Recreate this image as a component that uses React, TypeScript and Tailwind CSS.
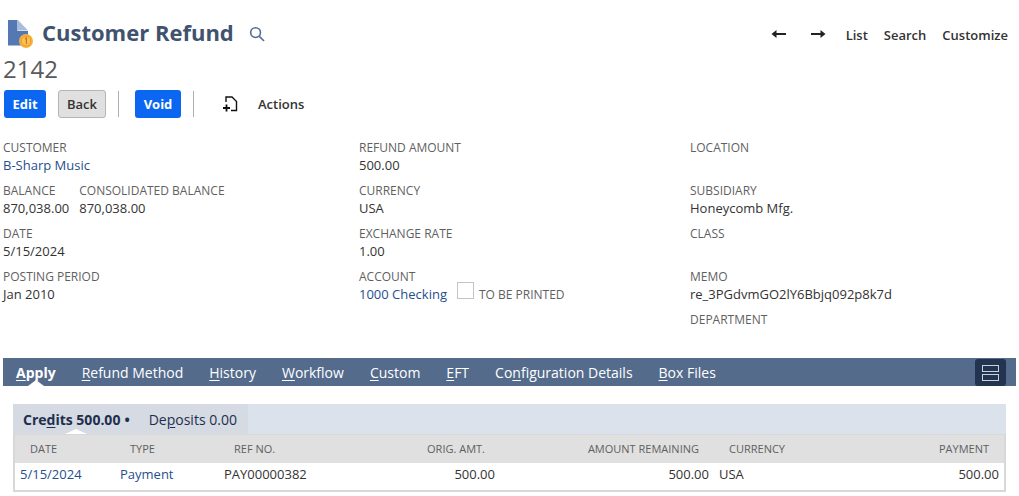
import React from "react";

const Label = ({ children }: { children: React.ReactNode }) => (
  <div className="text-[12px] leading-[18px] text-[#5f5f5f] uppercase">{children}</div>
);
const Value = ({ children, link }: { children?: React.ReactNode; link?: boolean }) => (
  <div className={`text-[13px] leading-[18px] h-[18px] whitespace-nowrap -mt-px ${link ? "text-[#1f4f8f]" : "text-[#333333]"}`}>{children}</div>
);
const Field = ({ label, value, link }: { label: string; value?: string; link?: boolean }) => (
  <div className="h-[43px] pt-[2px]">
    <Label>{label}</Label>
    <Value link={link}>{value}</Value>
  </div>
);
const U = ({ children }: { children: React.ReactNode }) => <span className="underline underline-offset-2">{children}</span>;

const Tab = ({ children, active }: { children: React.ReactNode; active?: boolean }) => (
  <div className={`relative h-[28px] flex items-center text-[14px] whitespace-nowrap ${active ? "font-bold text-white" : "text-white"}`}>
    {children}
    {active && <div className="absolute bottom-0 left-1/2 -ml-[8px] w-0 h-0 border-x-[8px] border-x-transparent border-b-[6px] border-b-white" />}
  </div>
);

const cols = "grid grid-cols-[100px_104px_120px_161px_214px_136px_154px]";

export default function App() {
  return (
    <div className="w-[1019px] h-[496px] overflow-hidden bg-white relative font-['Open_Sans',sans-serif]">
      <div className="flex items-start h-[54px]">
        <svg width="28" height="30" viewBox="0 0 28 30" className="ml-[7px] mt-[19px]">
          <path d="M1 1h9.5v11H21v14.5H1z" fill="#5478b4" />
          <path d="M11 1l10 10.5H11z" fill="#a9bcd9" />
          <circle cx="19" cy="22" r="7" fill="#f7b23b" />
          <circle cx="19" cy="22" r="4.8" fill="#fbc05a" stroke="#ea9518" strokeWidth="0.8" />
          <path d="M17.8 20l1.6-.9v6" stroke="#c87a10" strokeWidth="1.2" fill="none" />
        </svg>
        <div className="ml-[7px] mt-[16px] text-[22px] leading-[32px] font-bold text-[#3f526e] whitespace-nowrap">Customer Refund</div>
        <svg width="16" height="16" viewBox="0 0 17 17" className="ml-[15px] mt-[26px]" fill="none" stroke="#4f6f98" strokeWidth="1.7">
          <circle cx="7" cy="7" r="5.2" />
          <path d="M11 11l5 5" />
        </svg>
        <div className="ml-auto mt-[26px] flex items-center text-[13px] leading-[18px] font-semibold text-[#333333] pr-[11px]">
          <svg width="15" height="10" viewBox="0 0 15 10" fill="none" className="mb-[2px]">
            <path d="M15 5H4" stroke="#222" strokeWidth="2" />
            <path d="M5.5 1L0.5 5l5 4z" fill="#222" />
          </svg>
          <svg width="15" height="10" viewBox="0 0 15 10" fill="none" className="ml-[25px] mb-[2px]">
            <path d="M0 5h11" stroke="#222" strokeWidth="2" />
            <path d="M9.5 1l5 4-5 4z" fill="#222" />
          </svg>
          <span className="ml-[20px]">List</span>
          <span className="ml-[16px]">Search</span>
          <span className="ml-[16px]">Customize</span>
        </div>
      </div>
      <div className="ml-[3px] text-[24px] leading-[30px] text-[#5a5a5a]">2142</div>
      <div className="flex items-center h-[28px] mt-[6px] ml-[4px] text-[13px] font-bold">
        <div className="w-[42px] h-[28px] pt-px rounded-[3px] bg-[#0b66f2] text-white flex items-center justify-center">Edit</div>
        <div className="ml-[12px] w-[48px] h-[28px] pt-px rounded-[3px] bg-[#e0e0e0] border border-[#b5b5b5] text-[#333333] font-semibold flex items-center justify-center">Back</div>
        <div className="ml-[12px] w-px h-[26px] bg-[#b0b0b0]" />
        <div className="ml-[16px] w-[46px] h-[28px] pt-px rounded-[3px] bg-[#0b66f2] text-white flex items-center justify-center">Void</div>
        <div className="ml-[12px] w-px h-[26px] bg-[#b0b0b0]" />
        <svg width="16" height="16" viewBox="0 0 16 16" fill="none" stroke="#111" strokeWidth="1.4" className="ml-[28px]">
          <path d="M4 6V1h6l4.5 4.5V14.5H9" />
          <path d="M1 12h7M4.5 8.5v7" strokeWidth="1.8" />
        </svg>
        <span className="ml-[20px] pt-px font-semibold text-[#333333]">Actions</span>
      </div>

      <div className="grid grid-cols-[356px_331px_1fr] ml-[3px] mt-[19px]">
        <div>
          <Field label="Customer" value="B-Sharp Music" link />
          <div className="h-[43px] pt-[2px] flex gap-[10px]">
            <div><Label>Balance</Label><Value>870,038.00</Value></div>
            <div><Label>Consolidated Balance</Label><Value>870,038.00</Value></div>
          </div>
          <Field label="Date" value="5/15/2024" />
          <Field label="Posting Period" value="Jan 2010" />
        </div>
        <div>
          <Field label="Refund Amount" value="500.00" />
          <Field label="Currency" value="USA" />
          <Field label="Exchange Rate" value="1.00" />
          <div className="h-[43px] pt-[2px]">
            <Label>Account</Label>
            <div className="flex items-start">
              <Value link>1000 Checking</Value>
              <div className="ml-[10px] -mt-[4px] w-[17px] h-[17px] border border-[#c4c4c4] bg-white" />
              <div className="ml-[5px] text-[12px] leading-[18px] text-[#5f5f5f]">TO BE PRINTED</div>
            </div>
          </div>
        </div>
        <div>
          <Field label="Location" />
          <Field label="Subsidiary" value="Honeycomb Mfg." />
          <Field label="Class" />
          <Field label="Memo" value="re_3PGdvmGO2lY6Bbjq092p8k7d" />
          <Field label="Department" />
        </div>
      </div>

      <div className="absolute left-0 right-0 top-[358px]">
        <div className="ml-[3px] w-[1013px] h-[28px] bg-[#546b8c] flex items-center pl-[13px] pr-[10px] gap-[26px]">
          <Tab active><span><U>A</U>pply</span></Tab>
          <Tab><span><U>R</U>efund Method</span></Tab>
          <Tab><span><U>H</U>istory</span></Tab>
          <Tab><span><U>W</U>orkflow</span></Tab>
          <Tab><span><U>C</U>ustom</span></Tab>
          <Tab><span><U>E</U>FT</span></Tab>
          <Tab><span>Co<U>n</U>figuration Details</span></Tab>
          <Tab><span><U>B</U>ox Files</span></Tab>
          <div className="ml-auto mt-px w-[31px] h-[27px] rounded-[3px] bg-[#22344f] flex flex-col items-center justify-center gap-[2px]">
            <div className="w-[17px] h-[7px] border border-[#c9d2de]" />
            <div className="w-[17px] h-[7px] border border-[#c9d2de]" />
          </div>
        </div>

        <div className="ml-[13px] w-[993px] mt-[18px] h-[30px] bg-[#dbe2ec] flex">
          <div className="relative h-[30px] w-[235px] bg-[#d5dae3] flex items-center text-[14px] text-[#1e2f4d] whitespace-nowrap">
            <span className="ml-[10px] font-bold">Cre<U>d</U>its 500.00</span>
            <span className="ml-[4px] font-bold text-[14px]">•</span>
            <span className="ml-[19px]">De<U>p</U>osits 0.00</span>
            <div className="absolute left-[52px] bottom-0 w-0 h-0 border-x-[11px] border-x-transparent border-b-[5px] border-b-white" />
          </div>
        </div>
        <div className="ml-[13px] w-[993px] border-2 border-t border-[#d8d8d8] h-[58px]">
          <div className={`${cols} h-[28px] pt-px items-center bg-[#e0e0e0] text-[11px] text-[#5f5f5f] whitespace-nowrap`}>
            <div className="pl-[15px]">DATE</div>
            <div className="pl-[15px]">TYPE</div>
            <div className="pl-[15px]">REF NO.</div>
            <div className="text-right pr-[15px]">ORIG. AMT.</div>
            <div className="text-right pr-[15px]">AMOUNT REMAINING</div>
            <div className="pl-[15px]">CURRENCY</div>
            <div className="text-right pr-[15px]">PAYMENT</div>
          </div>
          <div className={`${cols} h-[27px] pb-[4px] items-center bg-white text-[13px] text-[#333333] whitespace-nowrap`}>
            <div className="pl-[5px] text-[#1f4f8f]">5/15/2024</div>
            <div className="pl-[5px] text-[#1f4f8f]">Payment</div>
            <div className="pl-[5px]">PAY00000382</div>
            <div className="text-right pr-[5px]">500.00</div>
            <div className="text-right pr-[5px]">500.00</div>
            <div className="pl-[5px]">USA</div>
            <div className="text-right pr-[5px]">500.00</div>
          </div>
        </div>
      </div>
    </div>
  );
}
